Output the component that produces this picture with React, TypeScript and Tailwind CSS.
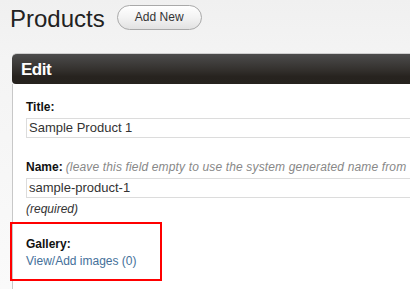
import React from "react";

export default function App() {
  const font = { fontFamily: '"Liberation Sans", Arial, Helvetica, sans-serif' };
  return (
    <div
      className="relative w-[410px] h-[289px] overflow-hidden flex flex-col bg-[linear-gradient(to_bottom,#f0f0f0,#f4f4f4_60px,#fafafa)]"
      style={font}
    >
      {/* Page heading */}
      <div className="flex items-start pt-[5px] pl-[10px]">
        <h1 className="mt-[2px] text-[24px] leading-[24px] font-normal text-[#222]">Products</h1>
        <button className="ml-[12px] w-[85px] h-[25px] rounded-full border border-[#a9a9a9] bg-[linear-gradient(to_bottom,#ffffff,#f3f3f3_50%,#e2e2e2)] text-[12px] leading-[23px] text-[#333] text-center">
          Add New
        </button>
      </div>

      {/* Panel */}
      <div className="mt-[22px] ml-[12px] flex flex-col flex-1 w-[398px]">
        <div className="h-[31px] border-t border-[#cfcfcf] rounded-tl-[5px] rounded-bl-[4px] bg-[linear-gradient(to_bottom,#4c4c4c,#35322f_50%,#27231f_75%,#26221e)] pt-[4px] pl-[9px]">
          <span className="text-white font-bold text-[17px] leading-[20px] tracking-[-0.5px]">Edit</span>
        </div>
        <div className="flex-1 bg-white border-l border-[#c8c8c8] pl-[13px] pt-[16px] overflow-hidden">
          <div className="text-[12px] leading-[14px] font-bold text-[#111]">Title:</div>
          <div className="mt-[4px] h-[20px] w-[400px] border border-[#dcdcdc] bg-white pl-[2px] text-[13px] leading-[18px] text-[#333]">
            Sample Product 1
          </div>

          <div className="mt-[22px] text-[12px] leading-[14px] whitespace-nowrap">
            <span className="font-bold text-[#111]">Name:</span>
            <span className="ml-[3px] italic text-[#888] tracking-[0.15px]">(leave this field empty to use the system generated name from</span>
          </div>
          <div className="mt-[4px] h-[20px] w-[400px] border border-[#dcdcdc] bg-white pl-[2px] text-[13px] leading-[18px] text-[#333]">
            sample-product-1
          </div>
          <div className="mt-[4px] text-[12px] leading-[14px] italic text-[#333]">(required)</div>

          <div className="mt-[21px] text-[12px] leading-[14px] font-bold text-[#111]">Gallery:</div>
          <div className="mt-[3px] text-[12px] leading-[14px]">
            <a href="#" className="text-[#44709a]">View/Add images (0)</a>
          </div>
        </div>
      </div>

      {/* Red highlight annotation */}
      <div className="absolute left-[10px] top-[222px] w-[152px] h-[59px] border-2 border-[#ff0000] pointer-events-none" />
    </div>
  );
}
